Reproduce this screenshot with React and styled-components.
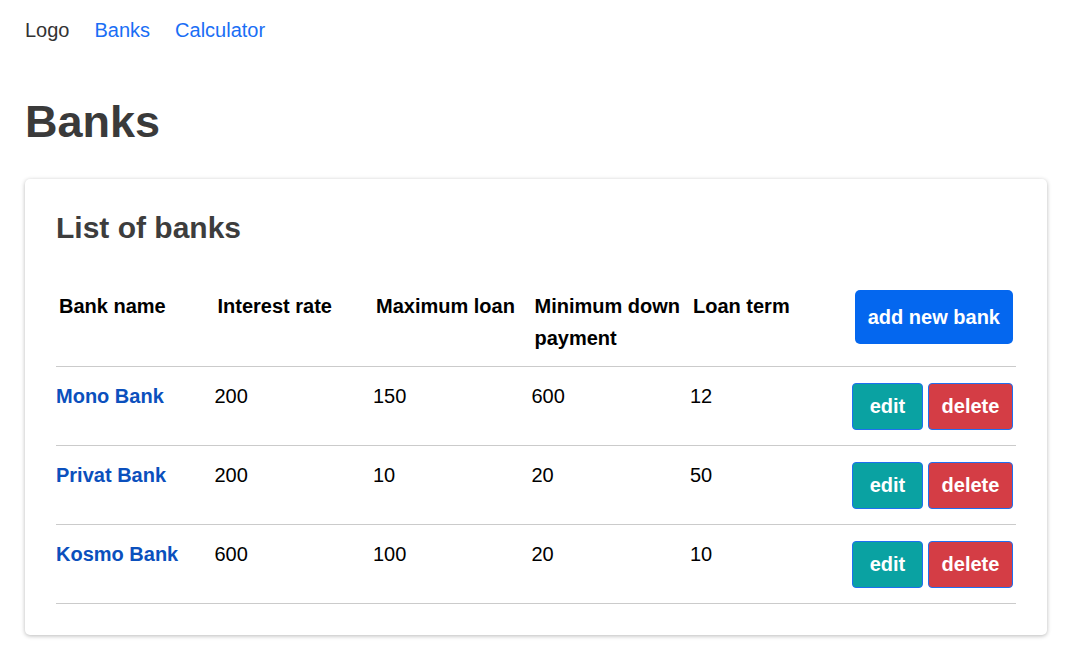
import styled, { createGlobalStyle } from "styled-components"

const GlobalStyle = createGlobalStyle`
    * { box-sizing: border-box; }
    body {
        margin: 0;
        background: #fff;
        font-family: "Liberation Sans", Arial, sans-serif;
        color: #000;
    }
`

const banks = [
    { name: "Mono Bank", rate: 200, max: 150, down: 600, term: 12 },
    { name: "Privat Bank", rate: 200, max: 10, down: 20, term: 50 },
    { name: "Kosmo Bank", rate: 600, max: 100, down: 20, term: 10 },
]

export default function App() {
    return (
        <>
            <GlobalStyle />
            <Page>
                <Nav>
                    <Brand>Logo</Brand>
                    <NavLink href="#">Banks</NavLink>
                    <NavLink href="#">Calculator</NavLink>
                </Nav>

                <Title>Banks</Title>

                <Card>
                    <CardTitle>List of banks</CardTitle>

                    <HeadRow>
                        <Th>Bank name</Th>
                        <Th>Interest rate</Th>
                        <Th>Maximum loan</Th>
                        <Th>Minimum down payment</Th>
                        <Th>Loan term</Th>
                        <HeadActions>
                            <AddButton>add new bank</AddButton>
                        </HeadActions>
                    </HeadRow>

                    {banks.map(bank => (
                        <Row key={bank.name}>
                            <Td><BankLink href="#">{bank.name}</BankLink></Td>
                            <Td>{bank.rate}</Td>
                            <Td>{bank.max}</Td>
                            <Td>{bank.down}</Td>
                            <Td>{bank.term}</Td>
                            <Actions>
                                <SmallButton $bg="#0aa2a2" $w={71}>edit</SmallButton>
                                <SmallButton $bg="#d43d45" $w={85}>delete</SmallButton>
                            </Actions>
                        </Row>
                    ))}
                </Card>
            </Page>
        </>
    )
}

const Page = styled.div`
    padding: 15px 22px 30px 25px;
`

const Nav = styled.nav`
    display: flex;
    align-items: center;
    gap: 25px;
    font-size: 20px;
    line-height: 30px;
`

const Brand = styled.span`
    color: #333;
`

const NavLink = styled.a`
    color: #1a6ef5;
    text-decoration: none;
`

const Title = styled.h1`
    margin: 51px 0 31px;
    font-size: 45px;
    line-height: 52px;
    font-weight: 700;
    color: #3a3a3a;
`

const Card = styled.section`
    background: #fff;
    border-radius: 5px;
    box-shadow: 0 1px 4px rgba(0, 0, 0, 0.28);
    padding: 31px 31px 31px;
`

const CardTitle = styled.h2`
    margin: 0 0 44px 0;
    font-size: 30px;
    line-height: 36px;
    font-weight: 700;
    color: #3d3d3d;
`

const Grid = styled.div`
    display: grid;
    grid-template-columns: repeat(5, 158.5px) 1fr;
    align-items: start;
    border-bottom: 1px solid #cbcbcb;
    font-size: 20px;
    line-height: 32px;
`

const HeadRow = styled(Grid)`
    padding-bottom: 12px;
`

const Th = styled.div`
    padding: 0 6px 0 3px;
    font-weight: 700;
    color: #000;
`

const HeadActions = styled.div`
    display: flex;
    justify-content: flex-end;
    padding-right: 3px;
`

const AddButton = styled.button`
    height: 54px;
    padding: 0 13px;
    border: none;
    border-radius: 5px;
    background: #0467ef;
    color: #fff;
    font-family: inherit;
    font-size: 20px;
    font-weight: 700;
`

const Row = styled(Grid)``

const Td = styled.div`
    padding: 13px 4px 0 0;
    color: #000;
`

const BankLink = styled.a`
    color: #0b50bd;
    font-weight: 700;
    text-decoration: none;
`

const Actions = styled.div`
    display: flex;
    justify-content: flex-end;
    gap: 5px;
    padding: 16px 3px 15px 0;
`

const SmallButton = styled.button`
    width: ${p => p.$w}px;
    height: 47px;
    padding: 0;
    border: 1px solid #1f6ff0;
    border-radius: 4px;
    background: ${p => p.$bg};
    color: #fff;
    font-family: inherit;
    font-size: 20px;
    font-weight: 700;
`
